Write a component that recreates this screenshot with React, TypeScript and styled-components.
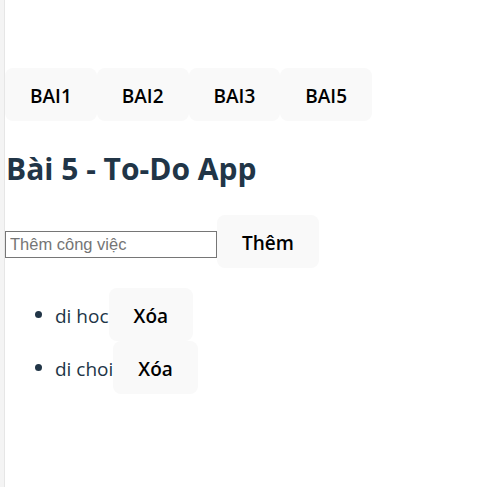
import React, { useState } from "react";
import styled, { createGlobalStyle } from "styled-components";

const GlobalStyle = createGlobalStyle`
  html, body {
    margin: 0;
    padding: 0;
    background: #ffffff;
  }
  body {
    font-family: "Open Sans", "Noto Sans", sans-serif;
    color: #213547;
    min-height: 487px;
    border-left: 4px solid #f4f4f4;
    box-shadow: inset 1px 0 0 #e6e6e6;
  }
`;

const Page = styled.div`
  padding: 68px 0 0 1px;
`;

const Nav = styled.nav`
  display: flex;
`;

const Button = styled.button`
  font-family: "Open Sans", "Noto Sans", sans-serif;
  font-size: 19px;
  font-weight: 600;
  line-height: 27px;
  color: #000;
  background: #f9f9f9;
  border: 1px solid transparent;
  border-radius: 8px;
  padding: 14px 24px 10px;
  vertical-align: top;
  cursor: pointer;
`;

const Title = styled.h2`
  margin: 29px 0 27px;
  font-size: 30px;
  font-weight: 700;
  line-height: 38px;
  color: #213547;
  padding-left: 1px;
`;

const AddRow = styled.div`
  display: flex;
  align-items: center;
`;

const Input = styled.input`
  width: 212px;
  height: 27px;
  margin-top: 6px;
  box-sizing: border-box;
  border: 1px solid #767676;
  font-family: "Liberation Sans", Arial, sans-serif;
  font-size: 16.5px;
  padding: 1px 4px;
  &::placeholder {
    color: #757575;
  }
`;

const List = styled.ul`
  margin: 20px 0 0;
  padding-left: 50px;
`;

const Item = styled.li`
  font-size: 19px;
  line-height: 53px;
  &::marker {
    color: #213547;
  }
`;

const ItemText = styled.span`
  position: relative;
  top: 2px;
`;

export default function App() {
  const [todos] = useState(["di hoc", "di choi"]);
  return (
    <>
      <GlobalStyle />
      <Page>
        <Nav>
          <Button>BAI1</Button>
          <Button>BAI2</Button>
          <Button>BAI3</Button>
          <Button>BAI5</Button>
        </Nav>
        <Title>Bài 5 - To-Do App</Title>
        <AddRow>
          <Input placeholder="Thêm công việc" />
          <Button>Thêm</Button>
        </AddRow>
        <List>
          {todos.map((t) => (
            <Item key={t}>
              <ItemText>{t}</ItemText>
              <Button>Xóa</Button>
            </Item>
          ))}
        </List>
      </Page>
    </>
  );
}
